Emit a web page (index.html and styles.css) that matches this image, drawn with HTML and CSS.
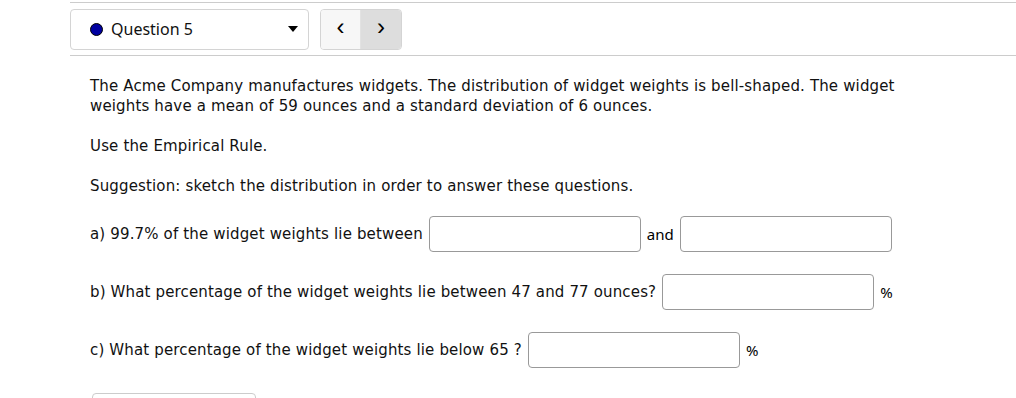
FILE: index.html
```html
<!DOCTYPE html>
<html lang="en">
<head>
    <meta charset="UTF-8">
    <title>Question 5</title>
    <link rel="stylesheet" href="styles.css">
</head>
<body>
    <div class="page">
        <div class="nav-bar">
            <div class="question-select">
                <span class="status-dot"></span>
                <span class="question-label">Question 5</span>
                <span class="caret"></span>
            </div>
            <div class="nav-buttons">
                <button class="nav-btn prev">&lsaquo;</button>
                <button class="nav-btn next">&rsaquo;</button>
            </div>
        </div>

        <div class="question">
            <p>The Acme Company manufactures widgets. The distribution of widget weights is bell-shaped. The widget weights have a mean of 59 ounces and a standard deviation of 6 ounces.</p>
            <p>Use the Empirical Rule.</p>
            <p>Suggestion: sketch the distribution in order to answer these questions.</p>
            <div class="answer-row">
                <span>a) 99.7% of the widget weights lie between</span>
                <input type="text" class="answer">
                <span class="unit">and</span>
                <input type="text" class="answer">
            </div>
            <div class="answer-row">
                <span>b) What percentage of the widget weights lie between 47 and 77 ounces?</span>
                <input type="text" class="answer">
                <span class="unit">%</span>
            </div>
            <div class="answer-row">
                <span>c) What percentage of the widget weights lie below 65 ?</span>
                <input type="text" class="answer">
                <span class="unit">%</span>
            </div>
            <button class="submit-btn"></button>
        </div>
    </div>
</body>
</html>
```

FILE: styles.css
```css
body {
    margin: 0;
    font-family: "DejaVu Sans", Verdana, sans-serif;
    font-size: 15px;
    letter-spacing: 0.15px;
    color: #111;
    background: #ffffff;
    overflow: hidden;
}
.page {
    padding: 2px 0 0 70px;
}
.nav-bar {
    display: flex;
    align-items: center;
    gap: 11px;
    height: 54px;
    border-top: 1px solid #cccccc;
    border-bottom: 1px solid #cccccc;
    box-sizing: border-box;
    letter-spacing: 0;
}
.question-select {
    display: flex;
    align-items: center;
    width: 239px;
    height: 41px;
    box-sizing: border-box;
    border: 1px solid #d4d4d4;
    border-radius: 4px;
    padding: 0 10px 0 19px;
    font-family: "Noto Sans", "Open Sans", sans-serif;
    font-size: 16px;
}
.status-dot {
    width: 11px;
    height: 11px;
    border-radius: 50%;
    background: #0000a0;
    border: 1px solid #000;
    margin-right: 8px;
}
.question-label {
    flex: 1;
}
.caret {
    width: 0;
    height: 0;
    border-left: 5px solid transparent;
    border-right: 5px solid transparent;
    border-top: 6px solid #000;
}
.nav-buttons {
    display: flex;
    height: 41px;
    border: 1px solid #d4d4d4;
    border-radius: 4px;
    overflow: hidden;
    box-sizing: border-box;
}
.nav-btn {
    width: 40px;
    border: none;
    font-family: "Liberation Sans", sans-serif;
    font-size: 24px;
    color: #000;
    padding: 0 0 4px;
}
.prev {
    background: #f7f7f7;
    border-right: 1px solid #e2e2e2;
}
.next {
    background: #dddddd;
}
.question {
    padding: 20px 0 0 20px;
}
.question p {
    margin: 0 0 20px;
    line-height: 20px;
    max-width: 840px;
}
.answer-row {
    display: flex;
    align-items: center;
    margin-bottom: 22px;
}
.answer {
    width: 212px;
    height: 36px;
    box-sizing: border-box;
    border: 1px solid #999;
    border-radius: 4px;
    margin: 0 6px;
}
.unit {
    font-family: "Noto Sans", "Open Sans", sans-serif;
    font-size: 15px;
    letter-spacing: 0;
    color: #000;
}
.submit-btn {
    display: block;
    width: 164px;
    height: 34px;
    margin-top: 25px;
    margin-left: 2px;
    background: #fff;
    border: 1px solid #cccccc;
    border-radius: 4px;
}
```
